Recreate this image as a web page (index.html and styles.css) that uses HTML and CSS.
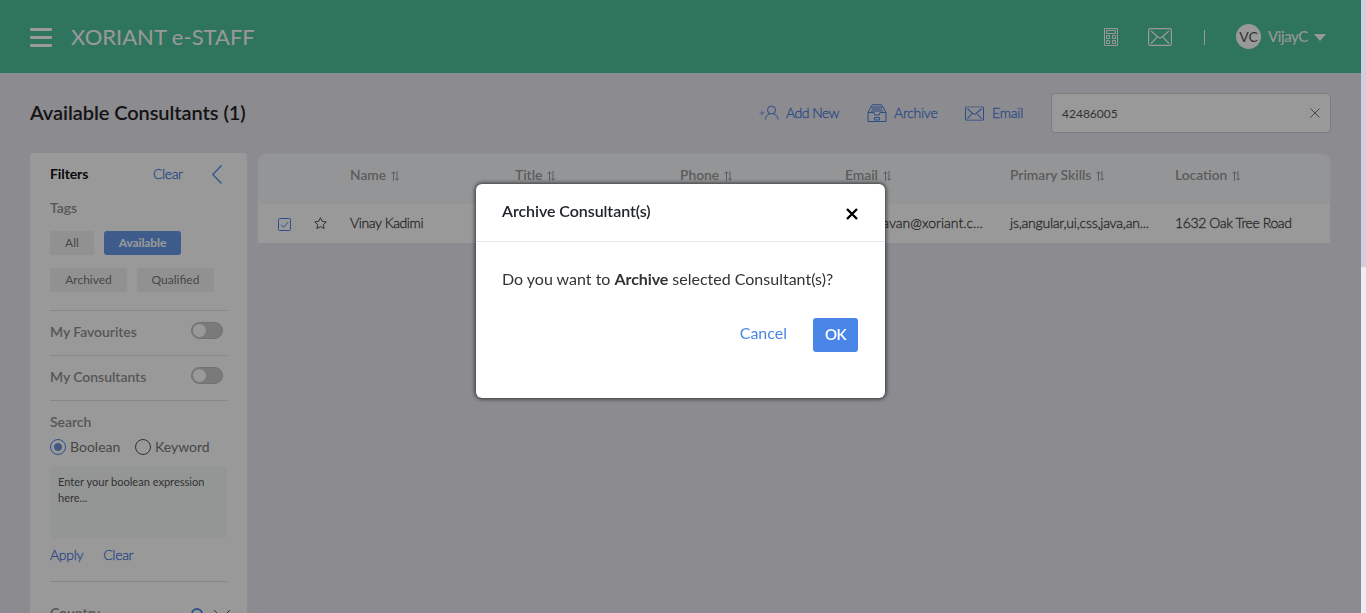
FILE: index.html
```html
<!DOCTYPE html>
<html lang="en">
<head>
<meta charset="utf-8">
<title>XORIANT e-STAFF</title>
<link rel="stylesheet" href="styles.css">
</head>
<body>
<svg width="0" height="0" class="defs" aria-hidden="true">
  <symbol id="mail" viewBox="0 0 24 18"><rect x=".6" y=".6" width="22.8" height="16.8" rx="1.5"/><path d="M3 3l7.2 6.2q1.8 1.3 3.6 0L21 3M3 15.5l6.5-6.8M21 15.5l-6.500-6.800"/></symbol>
  <symbol id="sort" viewBox="0 0 8 10"><path d="M2.500 10V.8M.5 2.800l2-2 2 2M6 0v9.200M4.400 7.500L6 9.200l1.800-1.700"/></symbol>
</svg>
<div class="page">
  <header class="topbar">
    <div class="burger"><i></i><i></i><i></i></div>
    <div class="brand"><span>XORIANT e-STAFF</span></div>
    <svg class="calc" viewBox="0 0 14 18"><path d="M.5.5h13v17H.5zM2.500 2.500h9v3h-9zM2.500 7.500h3v3h-3zM8.500 7.500h3v3h-3zM2.500 12.500h3v3h-3zM8.500 12.500h3v3h-3z"/></svg>
    <svg class="topmail"><use href="#mail"/></svg>
    <span class="divider"></span>
    <span class="avatar">VC</span>
    <span class="user">VijayC</span>
    <span class="caret"></span>
  </header>
  <main class="content">
    <div class="toolbar">
      <h1 class="title"><span>Available Consultants (1)</span></h1>
      <a class="action add"><svg viewBox="0 0 20 16"><path class="thin" d="M.5 8h5M3 5.500v5"/><circle cx="12.500" cy="5" r="4"/><path d="M6.500 14.500c0-3 2-5 4-5.500M14.500 9c2.500.5 4.500 2.500 4.500 5.500"/></svg>Add New</a>
      <a class="action archive"><svg viewBox="0 0 20 18"><path d="M1 8.500h6l.8 2.500h4.400l.8-2.500h6v9H1zM1 8.500L4 3h12l3 5.500M4 3l1.500-2.300h9L16 3M5 5h10M4 7h12M7.500 13.500h5v2.500h-5z"/></svg>Archive</a>
      <a class="action email"><svg class="mail" viewBox="0 0 24 18"><use href="#mail"/></svg>Email</a>
      <div class="search"><span>42486005</span><svg viewBox="0 0 10 10"><path d="M.5.5l9 9M9.500.5l-9 9"/></svg></div>
    </div>
    <div class="columns">
      <aside class="filters">
        <div class="filters-head"><b>Filters</b><a>Clear</a><svg viewBox="0 0 10 19"><path d="M9.500.5L.8 9.500l8.700 9"/></svg></div>
        <div class="label tags">Tags</div>
        <div class="chips">
          <span class="chip all">All</span><span class="chip active">Available</span>
          <span class="chip">Archived</span><span class="chip">Qualified</span>
        </div>
        <div class="switch-row"><span class="label">My Favourites</span><span class="switch"><i></i></span></div>
        <div class="switch-row"><span class="label">My Consultants</span><span class="switch"><i></i></span></div>
        <div class="query">
          <div class="label">Search</div>
          <div class="radios"><span class="radio on"></span><span class="boolean">Boolean</span><span class="radio"></span><span>Keyword</span></div>
          <div class="expression">Enter your boolean expression here...</div>
          <div class="links"><a>Apply</a><a>Clear</a></div>
        </div>
        <div class="country"><span class="label">Country</span><svg class="lens" viewBox="0 0 14 14"><circle cx="6" cy="6" r="5"/><path d="M10 10l4 4"/></svg><svg class="chevron" viewBox="0 0 18 10"><path d="M1 1l8 8 8-8"/></svg></div>
      </aside>
      <section class="table">
        <div class="row head"><span></span><span></span>
          <span class="h">Name<svg><use href="#sort"/></svg></span><span class="h">Title<svg><use href="#sort"/></svg></span><span class="h">Phone<svg><use href="#sort"/></svg></span><span class="h">Email<svg><use href="#sort"/></svg></span><span class="h">Primary Skills<svg><use href="#sort"/></svg></span><span class="h">Location<svg><use href="#sort"/></svg></span>
        </div>
        <div class="row body">
          <span class="check"><svg viewBox="0 0 13 13"><rect x=".5" y=".5" width="12" height="12" rx="1"/><path d="M3 6.800l2.500 2.500L10.300 4"/></svg></span>
          <span class="star"><svg viewBox="0 0 14 13"><path d="M7 .8l1.900 3.900 4.300.6-3.100 3 .8 4.200L7 10.500l-3.900 2 .8-4.200-3.100-3 4.300-.6z"/></svg></span>
          <span>Vinay Kadimi</span><span></span><span></span><span class="mailcell">v.raghavan@xoriant.c...</span><span class="skills">js,angular,ui,css,java,an...</span><span>1632 Oak Tree Road</span>
        </div>
      </section>
    </div>
  </main>
</div>
<div class="overlay">
  <div class="dialog">
    <div class="dialog-head"><span>Archive Consultant(s)</span><svg viewBox="0 0 12 12"><path d="M1 1l10 10M11 1L1 11"/></svg></div>
    <p class="question">Do you want to <b>Archive</b> selected Consultant(s)?</p>
    <div class="buttons"><a>Cancel</a><span class="ok">OK</span></div>
  </div>
</div>
<div class="scrollbar"><i></i></div>
</body>
</html>
```

FILE: styles.css
```css
* { box-sizing: border-box; }
body { margin: 0; height: 613px; overflow: hidden; font: 14px/20px Lato, sans-serif; color: #555; background: #e8e8f0; }
svg { fill: none; stroke: currentColor; stroke-width: 1; flex: none; display: block; }
.defs { position: absolute; }
a { color: #4a7fe0; }
.page { width: 1361px; height: 613px; overflow: hidden; }
.topbar { height: 73px; padding: 0 35px 0 30px; display: flex; align-items: center; background: #4fc19b; color: #fff; }
.burger { width: 22px; display: grid; gap: 5px; margin-right: 19px; padding-top: 2px; }
.burger i { height: 3px; border-radius: 1px; background: #fff; }
.brand { font-size: 22px; line-height: 28px; flex: 1; white-space: nowrap; }
.calc { width: 14px; height: 18px; margin-right: 30px; }
.topmail { width: 24px; height: 18px; margin-right: 32px; stroke-width: 1.200; }
.divider { width: 1px; height: 15px; background: #fff; margin: 2px 31px 0 0; }
.avatar { width: 25px; height: 25px; border-radius: 50%; background: #fff; color: #555; text-align: center; line-height: 25px; margin-right: 7px; }
.user { font-size: 15px; letter-spacing: -.4px; width: 40px; margin-right: 6px; white-space: nowrap; padding-bottom: 1px; }
.caret { border: 6px solid transparent; border-top: 7px solid #fff; border-bottom: 0; margin-top: 1px; }
.content { padding: 20px 30px 0; }
.toolbar { height: 40px; display: flex; align-items: center; }
.title { margin: 0; flex: 1; font-size: 20px; font-weight: 600; letter-spacing: -.06px; color: #222; padding-bottom: 2px; }
.action { display: flex; align-items: center; white-space: nowrap; font-weight: 300; -webkit-text-stroke: .3px; }
.add { width: 108px; gap: 7px; letter-spacing: -.5px; }
.add svg { width: 20px; height: 16px; }
.thin { opacity: .6; }
.archive { width: 98px; gap: 7px; letter-spacing: -.25px; }
.archive svg { width: 20px; height: 18px; }
.email { width: 86px; gap: 8px; letter-spacing: -.2px; }
.mail { width: 19px; height: 15px; stroke-width: 1.300; }
.search { width: 280px; height: 40px; display: flex; align-items: center; justify-content: space-between; padding: 0 10px; background: #fff; border: 1px solid #d2d2d2; border-radius: 4px; font-size: 12px; }
.search svg { width: 10px; height: 10px; color: #777; }
.search span { padding-top: 1px; }
.columns { display: flex; align-items: flex-start; gap: 11px; margin-top: 20px; }
.filters { width: 217px; height: 500px; padding: 11px 20px 0; background: #fff; border-radius: 4px; }
.filters-head { height: 20px; display: flex; align-items: center; }
.filters-head b { color: #111; width: 103px; letter-spacing: -.1px; }
.filters-head a { width: 59px; font-weight: 300; letter-spacing: -.4px; -webkit-text-stroke: .3px; }
.filters-head svg { width: 10px; height: 19px; margin-top: 1px; color: #4a86e8; stroke-width: 1.2; }
.label { color: #8f8f8f; font-weight: 600; letter-spacing: -.05px; }
.tags { margin-top: 14px; }
.chips { display: flex; flex-wrap: wrap; gap: 13px 10px; margin-top: 13px; padding-bottom: 18px; }
.chip { width: 77px; height: 24px; line-height: 24px; text-align: center; background: #f2f2f2; border-radius: 3px; font-size: 12px; color: #777; }
.all { width: 44px; }
.active { background: #6899e8; color: #fff; font-weight: 700; letter-spacing: -.1px; }
.switch-row { height: 45px; border-top: 1px solid #e2e2e8; display: flex; align-items: center; justify-content: space-between; padding: 0 4px 2px 0; }
.switch { width: 32px; height: 17px; margin-top: -3px; border-radius: 9px; background: #ccc; border: 1px solid #bdbdbd; padding: 1px; }
.switch i { display: block; width: 13px; height: 13px; border-radius: 50%; background: #fff; }
.query { border-top: 1px solid #e2e2e8; height: 181px; padding-top: 11px; }
.radios { display: flex; align-items: center; height: 16px; margin-top: 7px; color: #777; font-size: 14px; line-height: 22px; }
.radio { width: 16px; height: 16px; border: 1px solid #555; border-radius: 50%; margin-right: 4px; }
.on { border-color: #4a86e8; background: radial-gradient(#6b96dd 0 3.500px, #fff 4.500px); }
.boolean { width: 65px; white-space: nowrap; }
.expression { height: 73px; margin-top: 11px; padding: 8px; background: #f7fafb; border-radius: 5px; font-size: 11.050px; line-height: 16px; }
.links { display: flex; gap: 20px; margin-top: 6px; font-weight: 300; letter-spacing: -.3px; -webkit-text-stroke: .3px; }
.country { border-top: 1px solid #e2e2e8; display: flex; align-items: flex-start; padding-top: 21px; }
.country .label { width: 141px; flex: none; }
.lens { width: 14px; height: 14px; margin-top: 5px; color: #4a86e8; stroke-width: 1.8; }
.chevron { width: 18px; height: 10px; margin: 6px 0 0 8px; }
.table { width: 1074px; flex: none; height: 500px; margin-left: -1px; border: 1px solid #ededf2; border-radius: 8px 8px 0 0; overflow: hidden; }
.row { display: grid; grid-template-columns: 54px 38px repeat(5, 165px) 1fr; align-items: center; white-space: nowrap; }
.head { height: 50px; background: #f7f9fb; color: #999; padding-bottom: 8px; }
.h { display: flex; align-items: center; gap: 5px; font-weight: 600; font-size: 13.800px; }
.h svg { width: 8px; height: 10px; margin-top: 1px; }
.body { height: 39px; background: #fff; color: #444; font-weight: 300; letter-spacing: -.4px; -webkit-text-stroke: .3px; padding-bottom: 1px; }
.mailcell { letter-spacing: 0; padding-left: 1px; }
.skills { letter-spacing: -.22px; }
.check { color: #4a86e8; padding: 3px 0 0 20px; }
.check svg { width: 13px; height: 13px; }
.star { padding-left: 2px; }
.star svg { width: 13px; height: 12px; }
.overlay { position: fixed; left: 0; top: 0; width: 1361px; height: 613px; background: rgba(0,0,0,.4); padding: 184px 0 0 476px; }
.dialog { width: 409px; height: 214px; background: #fff; border-radius: 6px; box-shadow: 0 0 4px 1px rgba(0,0,0,.65); color: #333; }
.dialog a { color: #4a86e8; }
.dialog-head { height: 58px; padding: 0 27px 3px 26px; display: flex; align-items: center; justify-content: space-between; border-bottom: 1px solid #efe4e7; font-size: 16px; font-weight: 600; letter-spacing: -.06px; color: #212529; }
.dialog-head svg { width: 12px; height: 12px; margin-top: 5px; stroke: #000; stroke-width: 2.400; }
.question { margin: 27px 0 0 26px; font-size: 16px; white-space: nowrap; }
.question b { letter-spacing: -.1px; }
.buttons { display: flex; justify-content: flex-end; gap: 26px; margin: 29px 27px 0 0; font-size: 16px; line-height: 30px; }
.ok { width: 45px; height: 34px; line-height: 33px; border-radius: 3px; background: #4a86e8; color: #fff; text-align: center; font-size: 15px; font-weight: 600; letter-spacing: -.5px; }
.scrollbar { position: fixed; right: 0; top: 0; width: 5px; height: 613px; background: #ececf2; }
.scrollbar i { display: block; height: 267px; background: #d0cfe0; }
```
